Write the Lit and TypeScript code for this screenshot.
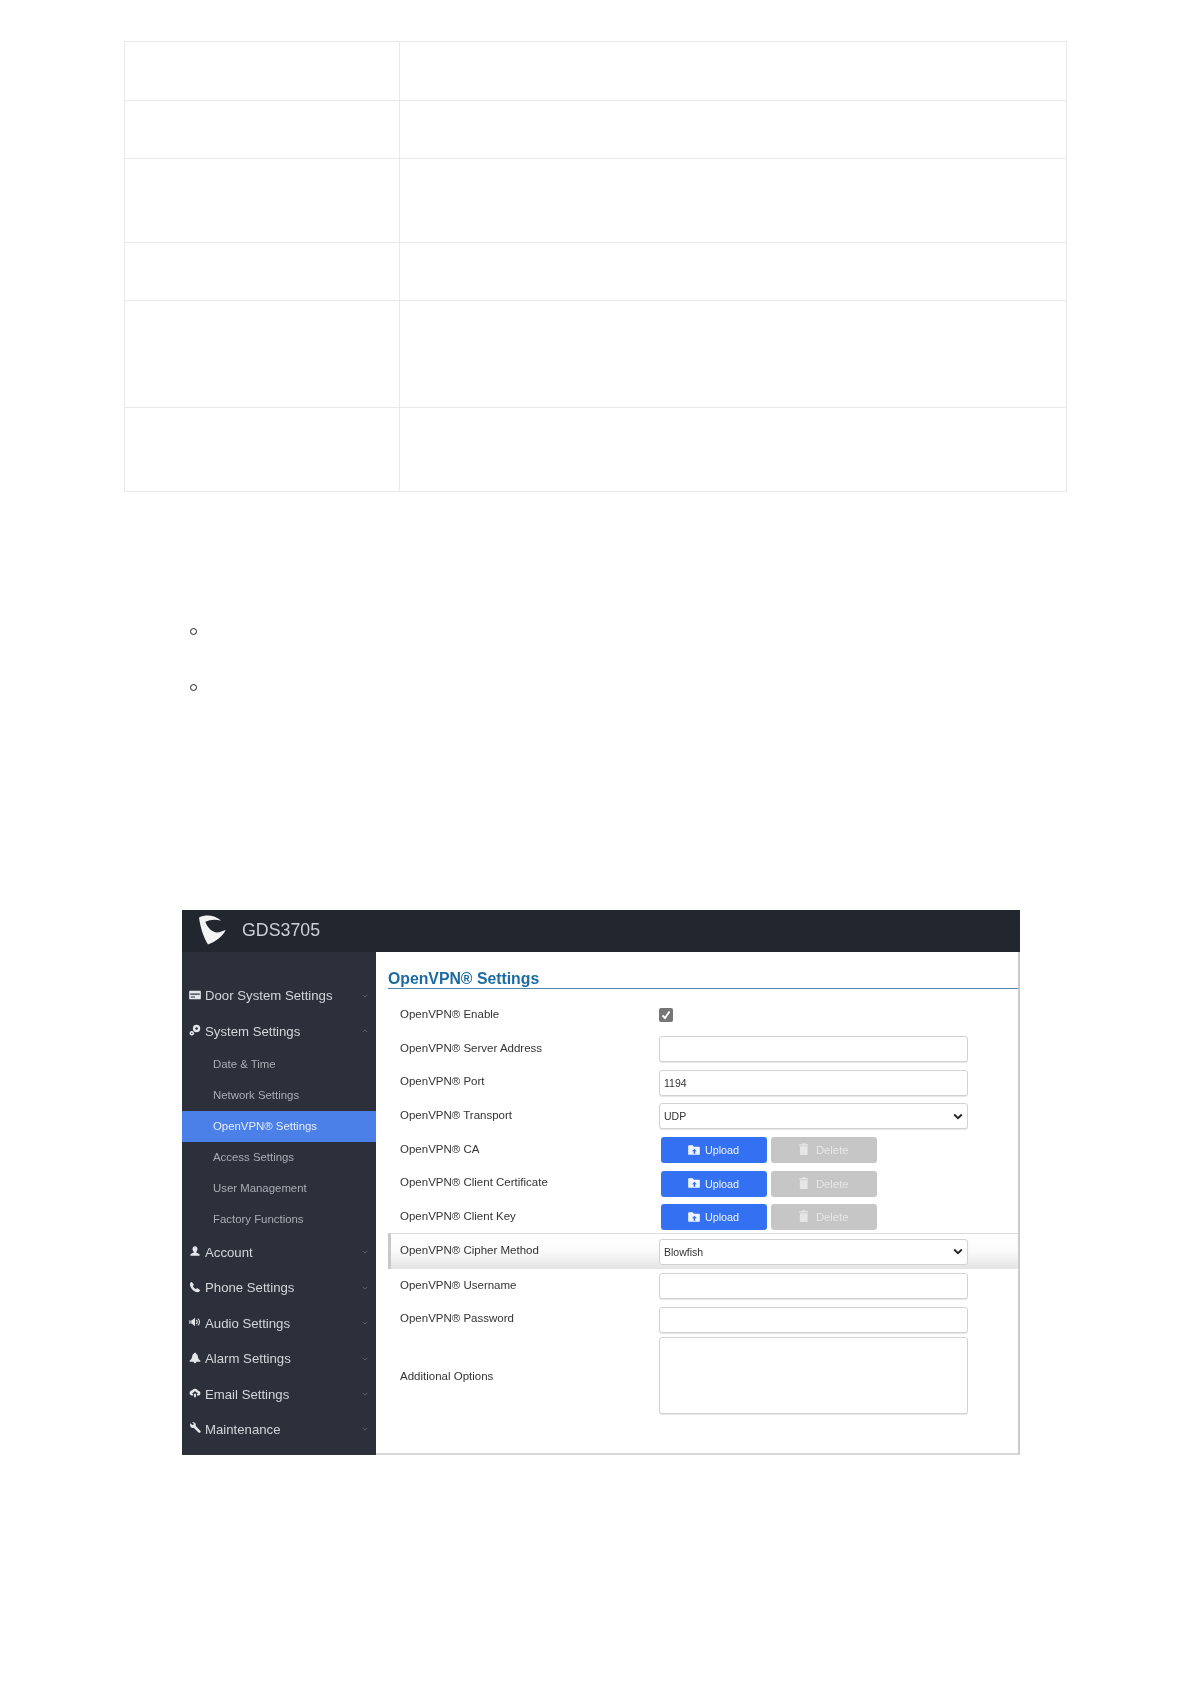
import { LitElement, html, css, svg } from "lit";
import { customElement } from "lit/decorators.js";

const tableRows = [59, 58, 84, 58, 107, 84];

const icons: Record<string, unknown> = {
  door: svg`<path fill-rule="evenodd" d="M1.200 2h11.600a1 1 0 0 1 1 1v8a1 1 0 0 1-1 1H1.200a1 1 0 0 1-1-1V3a1 1 0 0 1 1-1zM1.500 5.300v1.500h11V5.300zM2 8.800v1.200h5V8.800z"/>`,
  system: svg`<circle cx="8.800" cy="5.200" r="4.300"/><circle cx="8.800" cy="5.200" r="1.500" fill="#2b303b"/><circle cx="3.300" cy="10.800" r="2.600"/><circle cx="3.300" cy="10.800" r=".8" fill="#2b303b"/>`,
  account: svg`<path d="M7 1.600c1.800 0 2.900 1.300 2.900 3.200 0 1.300-.6 2.500-1.400 3.100v1c1.600.6 3.900 1 3.900 2.600v.9H1.600v-.9c0-1.600 2.300-2 3.900-2.600v-1c-.8-.6-1.400-1.800-1.400-3.100 0-1.900 1.100-3.200 2.900-3.200z"/>`,
  phone: svg`<path d="M3.400 1.200 5.500 4c.2.300.2.600-.1.900l-1 1c.8 1.600 2 2.800 3.700 3.700l1-1c.3-.3.6-.3.9-.1l2.700 2c.3.200.3.600.1.900-.7 1.100-1.600 1.700-2.700 1.600C5.600 12.600 1.600 8.500 1.100 4c-.1-1 .5-2 1.500-2.800.3-.2.600-.2.800 0z"/>`,
  audio: svg`<path d="M.4 4.600c1 .2 1.600.7 1.600 2.400S1.400 9.200.4 9.400zM2.600 5h1L7 2v10L3.600 9h-1z"/><path d="M8.400 4.600c.8.600 1.200 1.400 1.200 2.400s-.4 1.800-1.200 2.400M10.300 3c1.300 1 2 2.400 2 4s-.7 3-2 4" fill="none" stroke="currentColor" stroke-width="1.300"/>`,
  alarm: svg`<path d="M7 .8c1 0 1.300.6 1.400 1.300 1.300.6 1.800 1.800 1.900 3.200.1 1.700 1.300 3.300 3 4.900v1.100H.7v-1.100c1.700-1.600 2.900-3.200 3-4.900.1-1.400.6-2.600 1.900-3.200C5.700 1.400 6 .8 7 .8zM5.300 11.400h3.400c-.1 1-.8 1.600-1.700 1.600s-1.600-.6-1.700-1.600z"/>`,
  email: svg`<path fill-rule="evenodd" d="M3.800 3.800C4.400 2.700 5.600 2 7 2c1.700 0 3 1 3.500 2.300 1.700.2 2.800 1.400 2.800 2.900 0 1.500-1.200 2.700-2.800 2.700H9.200V8.200h1.500L7 4.800 3.300 8.200h1.500v1.700H3.500C1.800 9.900.7 8.700.7 7.100c0-1.700 1.300-3.100 3.100-3.300zM5.900 8h2.200v4H5.900z"/>`,
  wrench: svg`<path d="M1.700 1.500 3.800 3.600l1.500-.3.3-1.500L3.500.6C5-.2 7 .5 7.700 2c.3.800.3 1.700 0 2.400l5.500 5.700c.6.600.6 1.500 0 2.100s-1.500.6-2.100 0L5.400 6.700c-.7.300-1.600.3-2.400 0C1.300 6 .8 3.400 1.700 1.500z"/>`,
};

const folder = html`<svg class="btn-ic" viewBox="0 0 14 12" fill="currentColor"><path fill-rule="evenodd" d="M1 .3h4.500l1.300 1.700h6.200a1 1 0 0 1 1 1v7.700a1 1 0 0 1-1 1H1a1 1 0 0 1-1-1V1.300a1 1 0 0 1 1-1zM7.500 4.500 4.700 7.500h1.800v3h2v-3h1.800z"/></svg>`;
const trash = html`<svg class="btn-ic trash" viewBox="0 0 11 14" fill="currentColor"><path d="M3.800.2h3.400l.5 1.300h3v1.400H.3V1.500h3zM1 3.700h9V13a1 1 0 0 1-1 1H2a1 1 0 0 1-1-1z"/></svg>`;
const chev = (up = false) => html`<svg class="chev" viewBox="0 0 8 5"><path d="${up ? "M1 4l3-3 3 3" : "M1 1l3 3 3-3"}" fill="none" stroke="currentColor" stroke-width="1"/></svg>`;

@customElement("app-root")
export class AppRoot extends LitElement {
  static styles = css`
    :host { display: block; width: 1190px; height: 1684px; background: #fff; font-family: "Liberation Sans", Arial, sans-serif; }
    .page { display: flex; flex-direction: column; padding: 41px 123px 0 124px; }
    .table { border: 1px solid #e9e9ec; border-bottom: 0; width: 943px; box-sizing: border-box; }
    .tr { display: grid; grid-template-columns: 274px 1fr; border-bottom: 1px solid #e9e9ec; box-sizing: border-box; }
    .tr > div + div { border-left: 1px solid #e9e9ec; }
    .bullets { list-style: none; margin: 136px 0 0 66px; padding: 0; display: flex; flex-direction: column; gap: 49px; }
    .bullets li { width: 5px; height: 5px; border: 1.500px solid #222; border-radius: 50%; box-sizing: content-box; }
    .shot { width: 838px; height: 545px; margin: 219px 0 0 58px; display: flex; flex-direction: column; filter: blur(.35px); box-sizing: border-box; }
    .head { height: 42px; background: #22262e; display: flex; align-items: center; flex: none; }
    .logo { width: 30px; height: 32px; margin-left: 16px; margin-bottom: 3px; }
    .brand { font-size: 17.800px; color: #ccd0d6; margin-left: 14px; margin-bottom: 2px; }
    .body { display: flex; flex: 1; min-height: 0; }
    .side { width: 194px; flex: none; background: #2b303b; padding-top: 26px; box-sizing: border-box; color: #d2d5d9; }
    .mi { height: 35.400px; display: flex; align-items: center; padding: 0 8px 0 7px; font-size: 13.200px; }
    .mi svg.ic { width: 12px; height: 12px; fill: currentColor; color: #e4e6e9; margin-right: 4px; margin-top: -2px; flex: none; }
    .mi span { flex: 1; }
    .chev { width: 6px; height: 4px; color: #6d727c; flex: none; }
    .subs { display: flex; flex-direction: column; }
    .si { height: 31px; display: flex; align-items: center; padding-left: 31px; font-size: 11.400px; color: #a9adb4; }
    .si.on { background: #4a80e8; color: #e6edfa; }
    .main { flex: 1; border-right: 2px solid #c9cbce; border-bottom: 2px solid #d6d7d9; box-sizing: border-box; padding-top: 17px; min-width: 0; }
    h2 { margin: 0 0 0 12px; font-size: 15.800px; line-height: 20px; font-weight: 700; color: #1c6ba3; height: 19px; }
    .rule { margin-left: 12px; height: 1px; background: #4f86ad; margin-bottom: 9.500px; }
    .row { height: 33.700px; display: flex; align-items: center; margin-left: 12px; box-sizing: border-box; }
    .row.hi { height: 36px; margin-top: -1px; border-top: 1px solid #dcdcdc; border-left: 3px solid #c8c8c8; background: linear-gradient(#fff, #fafafa 50%, #e4e4e4); }
    .row.tall { height: 78px; }
    label { width: 271px; padding-left: 12px; box-sizing: border-box; font-size: 11.500px; color: #333; padding-bottom: 3px; flex: none; }
    .row.hi label { padding-left: 9px; width: 268px; padding-bottom: 3px; }
    .row.tall label { padding-bottom: 0; }
    .ctl { width: 309px; height: 26px; border: 1px solid #d2d2d2; border-radius: 3px; background: #fff; box-sizing: border-box; display: flex; align-items: center; justify-content: space-between; padding: 0 4px; font-size: 10.500px; color: #333; box-shadow: 0 1px 1px #e6e6e6; }
    .ctl.area { height: 77px; }
    .ctl svg { width: 10px; height: 7px; }
    .ck { width: 14px; height: 14px; border-radius: 2px; background: #767676; display: flex; align-items: center; justify-content: center; }
    .ck svg { width: 10px; height: 10px; }
    .btns { display: flex; gap: 4.500px; margin-left: 1.500px; }
    .btn { width: 106px; height: 26px; border-radius: 3px; display: flex; align-items: center; justify-content: center; gap: 5px; font-size: 10.800px; box-sizing: border-box; }
    .up { background: #3470f2; color: #eef3fe; }
    .del { background: #c6c6c6; color: #e6e6e6; gap: 7px; font-size: 11.300px; }
    .btn-ic { width: 12px; height: 10px; margin-top: -1px; }
    .btn-ic.trash { width: 9.500px; height: 12px; margin-top: -2px; }
  `;

  private mi(name: string, label: string, up = false) {
    return html`<div class="mi"><svg class="ic" viewBox="0 0 14 14">${icons[name]}</svg><span>${label}</span>${chev(up)}</div>`;
  }

  private upl(label: string) {
    return html`<div class="row"><label>${label}</label><div class="btns">
      <div class="btn up">${folder}Upload</div><div class="btn del">${trash}Delete</div>
    </div></div>`;
  }

  private selArrow() {
    return html`<svg viewBox="0 0 10 7"><path d="M1.200 1.500 5 5.200l3.800-3.700" fill="none" stroke="#222" stroke-width="1.800"/></svg>`;
  }

  render() {
    return html`<div class="page">
      <div class="table">
        ${tableRows.map((h) => html`<div class="tr" style="height:${h}px"><div></div><div></div></div>`)}
      </div>
      <ul class="bullets"><li></li><li></li></ul>
      <div class="shot">
        <div class="head">
          <svg class="logo" viewBox="25 15 90 95">
            <path fill="#f2f3f4" d="M28 25 C50 15 75 18 95 35 C80 30 62 30 47 38 C52 55 68 70 82 70 C90 70 100 66 108 62 C100 82 78 98 55 106 C42 85 32 55 28 25 Z"/>
          </svg>
          <div class="brand">GDS3705</div>
        </div>
        <div class="body">
          <div class="side">
            ${this.mi("door", "Door System Settings")}
            ${this.mi("system", "System Settings", true)}
            <div class="subs">
              <div class="si">Date &amp; Time</div>
              <div class="si">Network Settings</div>
              <div class="si on">OpenVPN® Settings</div>
              <div class="si">Access Settings</div>
              <div class="si">User Management</div>
              <div class="si">Factory Functions</div>
            </div>
            ${this.mi("account", "Account")}
            ${this.mi("phone", "Phone Settings")}
            ${this.mi("audio", "Audio Settings")}
            ${this.mi("alarm", "Alarm Settings")}
            ${this.mi("email", "Email Settings")}
            ${this.mi("wrench", "Maintenance")}
          </div>
          <div class="main">
            <h2>OpenVPN® Settings</h2>
            <div class="rule"></div>
            <div class="row"><label>OpenVPN® Enable</label><div class="ck"><svg viewBox="0 0 10 10"><path d="M1.500 5.500 4 8l4.500-6.500" fill="none" stroke="#fff" stroke-width="2"/></svg></div></div>
            <div class="row"><label>OpenVPN® Server Address</label><div class="ctl"></div></div>
            <div class="row"><label>OpenVPN® Port</label><div class="ctl">1194</div></div>
            <div class="row"><label>OpenVPN® Transport</label><div class="ctl">UDP${this.selArrow()}</div></div>
            ${this.upl("OpenVPN® CA")}
            ${this.upl("OpenVPN® Client Certificate")}
            ${this.upl("OpenVPN® Client Key")}
            <div class="row hi"><label>OpenVPN® Cipher Method</label><div class="ctl">Blowfish${this.selArrow()}</div></div>
            <div class="row"><label>OpenVPN® Username</label><div class="ctl"></div></div>
            <div class="row"><label>OpenVPN® Password</label><div class="ctl"></div></div>
            <div class="row tall"><label>Additional Options</label><div class="ctl area"></div></div>
          </div>
        </div>
      </div>
    </div>`;
  }
}
